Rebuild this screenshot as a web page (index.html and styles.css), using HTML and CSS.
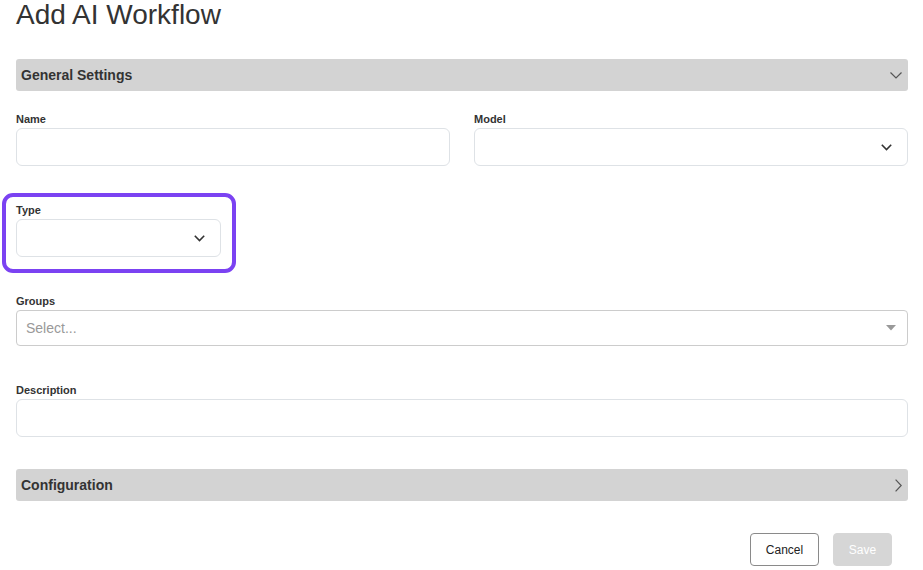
FILE: index.html
```html
<!DOCTYPE html>
<html lang="en">
<head>
<meta charset="utf-8">
<title>Add AI Workflow</title>
<link rel="stylesheet" href="styles.css">
</head>
<body>
<div class="page">
  <h1 class="title">Add AI Workflow</h1>

  <div class="section-bar bar-general">
    <span class="section-title">General Settings</span>
    <svg class="bar-icon" width="12" height="7" viewBox="0 0 12 7"><path d="M0.5 0.5 L6 6 L11.5 0.5" fill="none" stroke="#555" stroke-width="1.2"/></svg>
  </div>

  <div class="row two-col">
    <div class="field">
      <label class="label">Name</label>
      <div class="input"></div>
    </div>
    <div class="field">
      <label class="label">Model</label>
      <div class="input select">
        <svg class="chev" width="11" height="7" viewBox="0 0 11 7"><path d="M0.8 0.8 L5.5 5.5 L10.2 0.8" fill="none" stroke="#333" stroke-width="1.6"/></svg>
      </div>
    </div>
  </div>

  <div class="row">
    <div class="field type-field">
      <label class="label">Type</label>
      <div class="input select">
        <svg class="chev" width="11" height="7" viewBox="0 0 11 7"><path d="M0.8 0.8 L5.5 5.5 L10.2 0.8" fill="none" stroke="#333" stroke-width="1.6"/></svg>
      </div>
      <div class="highlight"></div>
    </div>
  </div>

  <div class="row">
    <div class="field">
      <label class="label">Groups</label>
      <div class="multi">
        <span class="placeholder">Select...</span>
        <svg class="caret" width="10" height="6" viewBox="0 0 10 6"><path d="M0 0 L10 0 L5 5.5 Z" fill="#999"/></svg>
      </div>
    </div>
  </div>

  <div class="row row-last">
    <div class="field">
      <label class="label">Description</label>
      <div class="input"></div>
    </div>
  </div>

  <div class="section-bar bar-config">
    <span class="section-title">Configuration</span>
    <svg class="bar-icon" width="7" height="13" viewBox="0 0 7 13"><path d="M0.6 0.6 L6.2 6.5 L0.6 12.4" fill="none" stroke="#555" stroke-width="1.2"/></svg>
  </div>

  <div class="actions">
    <button class="btn btn-cancel">Cancel</button>
    <button class="btn btn-save">Save</button>
  </div>
</div>
</body>
</html>
```

FILE: styles.css
```css
* { box-sizing: border-box; }

html, body {
  margin: 0;
  padding: 0;
  background: #fff;
}

body {
  font-family: "Liberation Sans", Arial, sans-serif;
  color: #333;
}

.page {
  padding: 0 15px 0 16px;
  width: 923px;
}

.title {
  margin: 0;
  font-size: 28px;
  font-weight: 400;
  line-height: 30px;
  color: #333;
}

.section-bar {
  height: 32px;
  background: #d3d3d3;
  border-radius: 3px;
  display: flex;
  align-items: center;
  justify-content: space-between;
  padding: 0 6px 0 5px;
}

.bar-general {
  margin-top: 29px;
}

.section-title {
  font-size: 14px;
  font-weight: 700;
  color: #333;
}

.row {
  margin-top: 22px;
}

.row + .row {
  margin-top: 38px;
}

.row-last {
  margin-bottom: 32px;
}

.two-col {
  display: grid;
  grid-template-columns: 1fr 1fr;
  column-gap: 24px;
}

.field {
  display: flex;
  flex-direction: column;
}

.label {
  display: block;
  font-size: 11px;
  font-weight: 700;
  line-height: 13px;
  margin-bottom: 2px;
  color: #333;
}

.input {
  height: 38px;
  border: 1px solid #dee2e6;
  border-radius: 6px;
  background: #fff;
}

.select {
  display: flex;
  align-items: center;
  justify-content: flex-end;
  padding-right: 15px;
}

.chev {
  display: block;
}

.type-field {
  position: relative;
  width: 205px;
}

.highlight {
  position: absolute;
  left: -14px;
  top: -11px;
  right: -15px;
  bottom: -16px;
  border: 4px solid #7b42f2;
  border-radius: 11px;
  pointer-events: none;
}

.multi {
  height: 36px;
  border: 1px solid #ccc;
  border-radius: 4px;
  display: flex;
  align-items: center;
  justify-content: space-between;
  padding: 0 11px 0 9px;
}

.placeholder {
  font-size: 14px;
  color: #999;
}

.caret {
  display: block;
}

.actions {
  display: flex;
  justify-content: flex-end;
  gap: 14px;
  padding-right: 16px;
  margin-top: 32px;
}

.btn {
  height: 33px;
  font-family: "Liberation Sans", Arial, sans-serif;
  font-size: 12px;
  border-radius: 4px;
  padding: 0 15px;
  display: flex;
  align-items: center;
  justify-content: center;
  cursor: pointer;
}

.btn-cancel {
  width: 69px;
  background: #fff;
  border: 1px solid #8a8a8a;
  color: #222;
}

.btn-save {
  width: 59px;
  background: #d6d6d6;
  border: 1px solid #d6d6d6;
  color: #fff;
}
```
